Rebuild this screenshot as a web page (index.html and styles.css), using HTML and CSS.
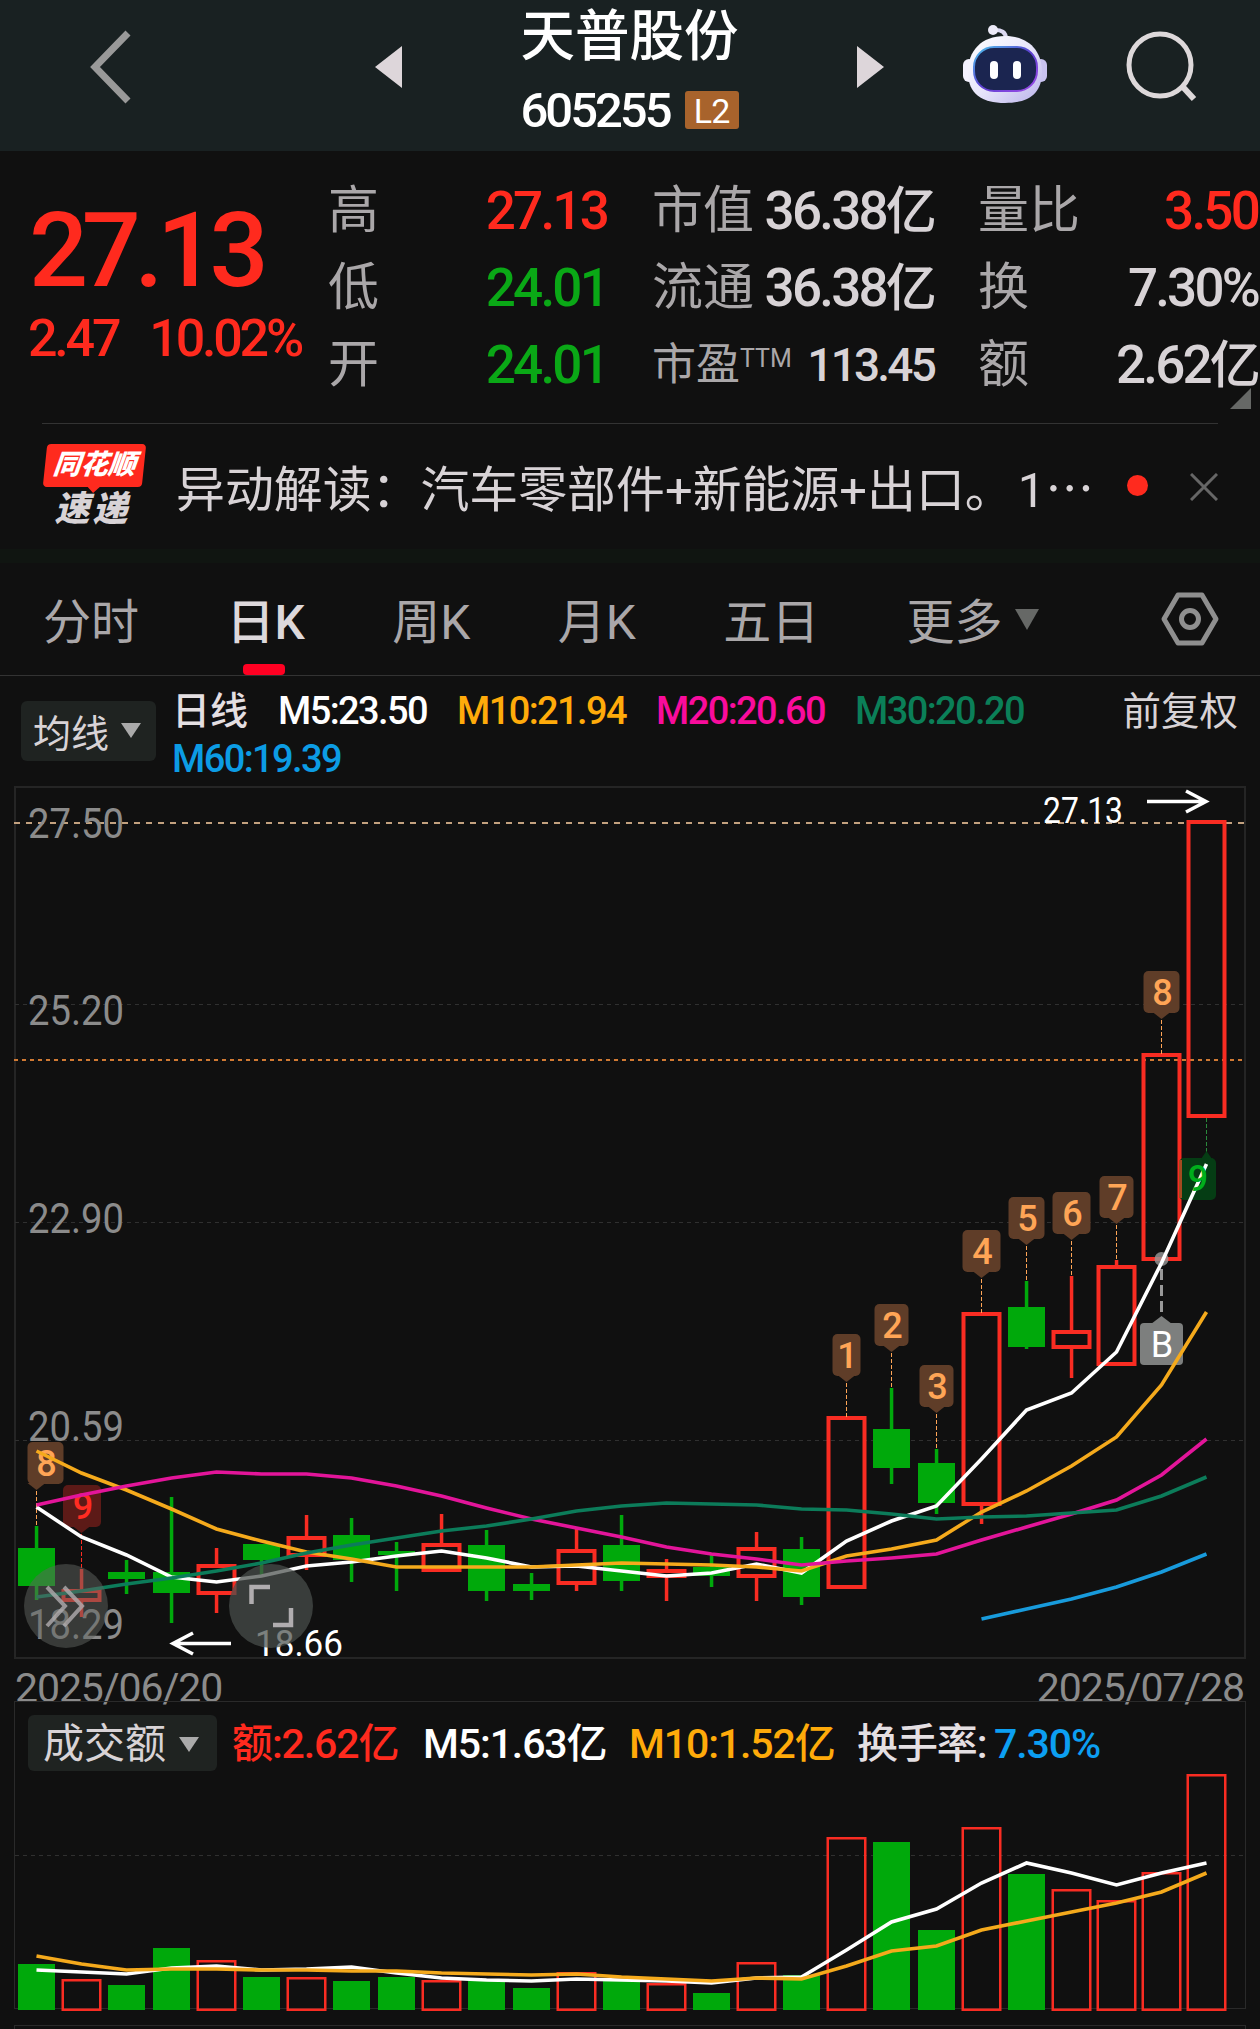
FILE: index.html
```html
<!DOCTYPE html>
<html lang="zh-CN">
<head>
    <meta charset="UTF-8">
    <meta name="viewport" content="width=device-width, initial-scale=1.0">
    <title>天普股份 605255</title>
    <link rel="stylesheet" href="styles.css">
</head>
<body>

    <header class="header">
        <svg class="back" width="48" height="80" viewBox="0 0 48 80"><path d="M41 6 L8 40 L41 74" fill="none" stroke="#999" stroke-width="7"/></svg>
        <svg class="prev" width="27" height="42" viewBox="0 0 27 42"><path d="M27 0 V42 L0 21Z" fill="#ddd6da"/></svg>
        <div class="stock">
            <h1>天普股份</h1>
            <div class="code"><span>605255</span><b>L2</b></div>
        </div>
        <svg class="next" width="27" height="42" viewBox="0 0 27 42"><path d="M0 0 V42 L27 21Z" fill="#ddd6da"/></svg>
        <svg class="robot" width="84" height="84" viewBox="0 0 84 84">
            <defs>
                <linearGradient id="shell" x1="0" y1="0" x2="1" y2="1">
                    <stop offset="0" stop-color="#fff"/><stop offset=".5" stop-color="#e8e6fb"/><stop offset="1" stop-color="#b9b2ea"/>
                </linearGradient>
                <linearGradient id="rim" x1="0" y1="0" x2="1" y2="1">
                    <stop offset="0" stop-color="#4cc4ee"/><stop offset=".5" stop-color="#5b3fd0"/><stop offset="1" stop-color="#a04be8"/>
                </linearGradient>
            </defs>
            <path d="M30 5 Q43 4 43 14" fill="none" stroke="#dcd9f2" stroke-width="4"/>
            <circle cx="30" cy="5" r="5" fill="#eceaf8"/>
            <rect x="0" y="34" width="12" height="23" rx="6" fill="#f4f2ff"/>
            <rect x="72" y="34" width="12" height="23" rx="6" fill="#c9c3f0"/>
            <path d="M42 11 C66 11 79 26 79 47 C79 69 65 78 42 78 C19 78 5 69 5 47 C5 26 18 11 42 11Z" fill="url(#shell)"/>
            <rect x="11" y="22" width="63" height="44" rx="20" fill="#1b2550" stroke="url(#rim)" stroke-width="2"/>
            <rect x="27" y="36" width="8" height="18" rx="4" fill="#fff"/>
            <rect x="50" y="36" width="8" height="18" rx="4" fill="#fff"/>
        </svg>
        <svg class="search" width="72" height="72" viewBox="0 0 72 72"><g fill="none" stroke="#ddd8da" stroke-width="5"><circle cx="34" cy="34" r="31"/><path d="M56 55 L68 68" stroke-width="6"/></g></svg>
    </header>

    <section class="quote">
        <div class="price">
            <div class="last">27.13</div>
            <div class="change"><span>2.47</span><span>10.02%</span></div>
        </div>
        <ul class="stats s1">
            <li><label>高</label><span class="red">27.13</span></li>
            <li><label>低</label><span class="green">24.01</span></li>
            <li><label>开</label><span class="green">24.01</span></li>
        </ul>
        <ul class="stats s2">
            <li><label>市值</label><span>36.38<i>亿</i></span></li>
            <li><label>流通</label><span>36.38<i>亿</i></span></li>
            <li class="pe"><label>市盈<sup>TTM</sup></label><span>113.45</span></li>
        </ul>
        <ul class="stats s3">
            <li><label>量比</label><span class="red">3.50</span></li>
            <li><label>换</label><span>7.30%</span></li>
            <li><label>额</label><span>2.62<i>亿</i></span></li>
        </ul>
        <svg class="corner" width="21" height="21" viewBox="0 0 21 21"><path d="M21 0V21H0Z" fill="#666866"/></svg>
    </section>

    <section class="news">
        <div class="logo">
            <div class="logo-top">同花顺</div>
            <div class="logo-bottom">速递</div>
        </div>
        <p>异动解读：汽车零部件+新能源+出口。<span class="one">1</span>⋯</p>
        <span class="dot"></span>
        <svg width="28" height="28" viewBox="0 0 28 28"><path d="M1 1 L27 27 M27 1 L1 27" stroke="#666" stroke-width="3"/></svg>
    </section>

    <nav class="tabs">
        <a>分时</a>
        <a class="active">日K</a>
        <a>周K</a>
        <a>月K</a>
        <a>五日</a>
        <a>更多</a>
        <svg class="more" width="26" height="21" viewBox="0 0 26 21"><path d="M1 0H25L13 21Z" fill="#666866"/></svg>
        <svg class="setting" width="58" height="54" viewBox="0 0 58 54"><g fill="none" stroke="#8f8f8f" stroke-width="5" stroke-linejoin="round"><path d="M17 3H41L55 27L41 51H17L3 27Z"/><circle cx="29" cy="27" r="8.5"/></g></svg>
    </nav>

    <section class="ma">
        <div class="select">均线<svg width="20" height="15" viewBox="0 0 20 15"><path d="M0 0H20L10 15Z" fill="#aaa"/></svg></div>
        <div class="ma-list">
            <span class="c0">日线</span>
            <span class="c5">M5:23.50</span>
            <span class="c10">M10:21.94</span>
            <span class="c20">M20:20.60</span>
            <span class="c30">M30:20.20</span>
            <span class="c60">M60:19.39</span>
        </div>
        <div class="adjust">前复权</div>
    </section>

    <svg id="kline" width="1260" height="878" viewBox="0 784 1260 878"></svg>

    <div class="dates"><span>2025/06/20</span><span>2025/07/28</span></div>

    <section class="volume">
        <div class="vol-head">
            <div class="select">成交额<svg width="20" height="15" viewBox="0 0 20 15"><path d="M0 0H20L10 15Z" fill="#aaa"/></svg></div>
            <span class="v1">额:2.62亿</span>
            <span class="v2">M5:1.63亿</span>
            <span class="v3">M10:1.52亿</span>
            <span class="v4">换手率:</span><span class="v5">7.30%</span>
        </div>
        <svg id="volume" width="1260" height="239" viewBox="0 1773 1260 239"></svg>
    </section>
    <div class="next-panel"></div>

    <script src="chart.js"></script>
</body>
</html>
```
FILE: styles.css
```css
body {
    margin: 0;
    width: 1260px;
    height: 2029px;
    overflow: hidden;
    background-color: #101010;
    color: #d8d3d6;
    font-family: Roboto, "Noto Sans CJK SC", sans-serif;
}
svg {
    display: block;
    flex: none;
}
.red { color: #ff2a1e; }
.green { color: #0aa816; }

/* header */
.header {
    display: flex;
    align-items: center;
    box-sizing: border-box;
    height: 151px;
    padding-bottom: 17px;
    background-color: #192122;
}
.back { margin-left: 87px; }
.prev { margin-left: 240px; }
.stock {
    align-self: flex-start;
    width: 230px;
    margin-left: 113px;
    color: #fff;
    text-align: center;
}
.stock h1 {
    margin: 0 0 0 -1px;
    font-size: 54.5px;
    font-weight: 500;
    line-height: 73px;
    white-space: nowrap;
}
.code {
    display: flex;
    align-items: center;
    justify-content: center;
    height: 74px;
    font-size: 49px;
    font-weight: 500;
    letter-spacing: -3px;
}
.code b {
    width: 54px;
    height: 38px;
    margin: -1px 1px 0 15px;
    border-radius: 3px;
    background-color: #a8632c;
    font-size: 34px;
    font-weight: 400;
    line-height: 40px;
    letter-spacing: -1px;
}
.next { margin-left: 112px; }
.robot { margin-left: 79px; }
.search { margin-left: 79px; }

/* quote */
.quote {
    position: relative;
    display: flex;
    height: 250px;
    padding-top: 22px;
    white-space: nowrap;
}
.price {
    width: 328px;
    color: #ff2a1e;
}
.last {
    padding: 26px 0 0 29px;
    font-size: 104px;
    font-weight: 500;
    line-height: 104px;
    letter-spacing: -6.4px;
}
.change {
    display: flex;
    gap: 31px;
    padding-left: 28px;
    font-size: 52px;
    font-weight: 500;
    line-height: 72px;
    letter-spacing: -3.2px;
}
.stats {
    margin: 0;
    padding: 0;
    list-style: none;
}
.stats li {
    display: flex;
    justify-content: space-between;
    height: 77px;
    font-size: 53px;
    font-weight: 500;
    line-height: 76px;
    letter-spacing: -2.8px;
}
.stats label {
    color: #aaa7a9;
    font-size: 51px;
    font-weight: 400;
    letter-spacing: 0;
}
.stats i {
    font-style: normal;
    font-size: 51px;
}
.s1 { width: 279px; }
.s2 { width: 282px; margin-left: 45px; }
.s3 { width: 280px; margin-left: 44px; }
.stats .pe { font-size: 46px; }
.pe label { font-size: 44px; }
.pe sup {
    font-size: 25px;
    line-height: 0;
    vertical-align: 13px;
}
.corner {
    position: absolute;
    right: 9px;
    top: 237px;
}

/* news */
.news {
    display: flex;
    align-items: center;
    height: 125px;
    margin: 0 42px;
    border-top: 1px solid #333;
}
.logo {
    flex: none;
    width: 103px;
    text-align: center;
    font-weight: 900;
    font-style: italic;
}
.logo-top {
    position: relative;
    height: 43px;
    line-height: 42px;
    margin: 0 1px 0 3px;
    border-radius: 4px;
    background-color: #ff2a1e;
    color: #fff;
    font-size: 27.5px;
    transform: skewX(-6deg);
}
.logo-top::after {
    content: "";
    position: absolute;
    left: 44px;
    top: 42px;
    border: 7px solid transparent;
    border-top-color: #ff2a1e;
}
.logo-bottom {
    margin: 4px 2px 0 0;
    line-height: 38px;
    font-size: 35px;
    letter-spacing: 3px;
}
.news p {
    flex: none;
    width: 914px;
    margin: -2px 0 0 31px;
    font-size: 48.9px;
    white-space: nowrap;
}
.one { margin-left: 4px; }
.dot {
    flex: none;
    width: 21px;
    height: 21px;
    margin: -2px 42px 0 37px;
    border-radius: 50%;
    background-color: #ff2a1e;
}
.news svg { margin-left: auto; }

/* period tabs */
.tabs {
    display: flex;
    align-items: center;
    box-sizing: border-box;
    height: 127px;
    padding: 0 41px 0 43px;
    border-top: 14px solid #101511;
    border-bottom: 1px solid #333;
    color: #aaa7a9;
    font-size: 48px;
    white-space: nowrap;
}
.tabs a {
    position: relative;
    margin: -2px 87.4px 0 0;
}
.tabs .active {
    color: #ddd8db;
    font-weight: 500;
}
.active::after {
    content: "";
    position: absolute;
    left: 17px;
    bottom: -22px;
    width: 42px;
    height: 11px;
    border-radius: 4px;
    background-color: #ff0022;
}
.tabs a:nth-child(6) { margin-right: 0; }
.more { margin-left: 11px; }
.setting { margin-left: auto; }

/* moving averages */
.ma {
    display: flex;
    height: 108px;
    white-space: nowrap;
}
.select {
    display: flex;
    align-items: center;
    box-sizing: border-box;
    border-radius: 6px;
    background-color: #1f2321;
}
.ma .select {
    width: 135px;
    height: 60px;
    margin: 25px 0 0 21px;
    padding: 0 0 2px 12px;
    gap: 12px;
    font-size: 38px;
}
.ma-list {
    display: flex;
    flex-wrap: wrap;
    align-content: flex-start;
    width: 900px;
    padding: 11px 0 0 16px;
    font-size: 38px;
    font-weight: 500;
    line-height: 48px;
    letter-spacing: -1.6px;
}
.ma-list .c0 {
    width: 106px;
    color: #e4dfe2;
    font-size: 38px;
    letter-spacing: 0;
}
.c5 { width: 179px; color: #fff; }
.c10 { width: 199px; color: #ffab0a; }
.c20 { width: 199px; color: #f90c9c; }
.c30 { width: 180px; color: #0b7f58; }
.c60 { color: #0c9ce4; }
.adjust {
    margin-left: auto;
    padding: 12px 22px 0 0;
    font-size: 38.5px;
    line-height: 48px;
}

/* charts */
.frame { fill: none; stroke: #252525; stroke-width: 2; }
.grid { stroke: #303030; stroke-width: 1; stroke-dasharray: 4 4; }
.up { fill: none; stroke: #f92c22; stroke-width: 4; }
.wick-up { fill: #f92c22; }
.down { fill: #00a90b; }
.line { fill: none; stroke-width: 3.6; }
.axis { fill: #8b8b8b; font-size: 42px; }
.mark { fill: #fff; font-size: 37px; }
.tag { font-size: 36px; font-weight: 500; text-anchor: middle; }
.buy { font-weight: 400; }
.volume .up { stroke-width: 2.5; }
.dates {
    display: flex;
    justify-content: space-between;
    height: 40px;
    padding: 0 16px 0 15px;
    color: #8b8b8b;
    font-size: 41px;
    line-height: 53px;
    letter-spacing: -1.1px;
}
.volume {
    position: relative;
    height: 310px;
}
.volume::before {
    content: "";
    position: absolute;
    left: 14px;
    top: -1px;
    width: 1230px;
    height: 306px;
    border: 1px solid #2a2a2a;
}
.vol-head {
    position: relative;
    display: flex;
    align-items: center;
    height: 56px;
    padding: 13px 0 2px 28px;
    font-size: 41px;
    font-weight: 500;
    line-height: 56px;
    letter-spacing: -1.1px;
    white-space: nowrap;
}
.vol-head span { margin-top: 2px; }
.vol-head .select {
    width: 189px;
    height: 56px;
    padding: 2px 0 0 15px;
    gap: 13px;
    letter-spacing: 0;
    font-weight: 400;
}
.vol-head .v1 { width: 191px; margin-left: 15px; color: #ff2a1e; }
.v2 { width: 206px; color: #fff; }
.v3 { width: 228px; color: #ffab0a; }
.v4 { width: 137px; color: #e4dfe2; }
.v5 { color: #0c9ff2; }
#volume { position: relative; }
.next-panel {
    height: 10px;
    margin: 13px 14px 0;
    border: 1px solid #2a2a2a;
}
```
FILE: chart.js
```js
// kind, body top, body bottom, wick top, wick bottom, volume bar top
const days = [
    ['g', 1548, 1586, 1526, 1600, 1964],
    ['r', 1589, 1602, 1569, 1617, 1980],
    ['g', 1572, 1579, 1560, 1594, 1985],
    ['g', 1572, 1593, 1497, 1623, 1948],
    ['r', 1564, 1595, 1548, 1613, 1961],
    ['g', 1544, 1560, 1544, 1575, 1977],
    ['r', 1536, 1557, 1515, 1570, 1978],
    ['g', 1535, 1560, 1518, 1582, 1981],
    ['g', 1551, 1555, 1542, 1591, 1977],
    ['r', 1543, 1572, 1514, 1572, 1981],
    ['g', 1545, 1591, 1530, 1601, 1981],
    ['g', 1584, 1591, 1573, 1600, 1988],
    ['r', 1549, 1585, 1529, 1591, 1973],
    ['g', 1545, 1581, 1515, 1591, 1980],
    ['r', 1569, 1578, 1559, 1601, 1984],
    ['g', 1567, 1576, 1555, 1587, 1993],
    ['r', 1547, 1578, 1532, 1601, 1963],
    ['g', 1549, 1597, 1537, 1605, 1975],
    ['r', 1416, 1589, 1416, 1589, 1838],
    ['g', 1429, 1468, 1388, 1484, 1842],
    ['g', 1463, 1503, 1449, 1514, 1930],
    ['r', 1312, 1506, 1312, 1524, 1828],
    ['g', 1307, 1347, 1281, 1349, 1874],
    ['r', 1330, 1349, 1276, 1378, 1890],
    ['r', 1265, 1366, 1260, 1366, 1901],
    ['r', 1053, 1261, 1053, 1261, 1873],
    ['r', 820, 1118, 820, 1118, 1775]
];
const ma5 = [1507,1537,1555,1577,1582,1576,1566,1562,1556,1551,1558,1567,1566,1571,1576,1573,1564,1573,1541,1521,1506,1459,1410,1393,1352,1263,1164];
const ma10 = [1451,1473,1490,1509,1529,1541,1552,1559,1567,1567,1567,1567,1565,1563,1564,1565,1567,1571,1556,1549,1540,1512,1491,1466,1437,1385,1312];
const ma20 = [1505,1495,1486,1478,1472,1474,1474,1478,1486,1496,1508,1519,1528,1537,1547,1554,1559,1565,1561,1558,1554,1540,1527,1514,1500,1475,1439];
const ma30 = [1597,1591,1584,1578,1571,1563,1553,1545,1538,1531,1526,1519,1511,1506,1503,1504,1505,1509,1510,1514,1519,1517,1516,1513,1510,1496,1477];
const ma60 = [1619,1609,1599,1587,1572,1554];
const vol5 = [1970,1972,1974,1968,1966,1970,1969,1967,1973,1978,1980,1981,1979,1980,1981,1983,1978,1977,1950,1922,1909,1883,1863,1873,1885,1873,1863];
const vol10 = [1956,1964,1970,1969,1969,1970,1970,1971,1971,1973,1974,1975,1974,1977,1979,1981,1978,1979,1966,1951,1946,1930,1921,1912,1903,1892,1873];

const x = i => 36.5 + i * 45;

function line(values, color, start = 0) {
    const pts = values.map((v, i) => x(i + start) + ',' + v).join(' ');
    return `<polyline class="line" stroke="${color}" points="${pts}"/>`;
}

function bar(i, kind, top, bottom, half) {
    if (kind === 'g') {
        return `<rect class="down" x="${x(i) - 18.5}" y="${top}" width="37" height="${bottom - top}"/>`;
    }
    return `<rect class="up" x="${x(i) - 20 + half}" y="${top + half}" width="${40 - 2 * half}" height="${bottom - top - 2 * half}"/>`;
}

function text(cls, tx, y, w, s) {
    return `<text class="${cls}" x="${tx}" y="${y}" textLength="${w}" lengthAdjust="spacingAndGlyphs">${s}</text>`;
}

// numbered tag hanging over a candle
function tag(i, top, w, s, bg = '#5f3d28', fg = '#ffa556', cx = x(i)) {
    return `<path d="M${x(i)} ${top + 49}V${top + 83}" stroke="${fg}" stroke-dasharray="4 2"/>
        <rect x="${cx - w / 2}" y="${top}" width="${w}" height="42" rx="5" fill="${bg}"/>
        <path d="M${x(i) - 9} ${top + 41}H${x(i) + 9}L${x(i)} ${top + 48}Z" fill="${bg}"/>
        <text class="tag" x="${cx + 1}" y="${top + 34}" fill="${fg}">${s}</text>`;
}

let k = '<path class="frame" d="M15 787H1245V1658H15Z"/>';
[1004.5, 1222.5, 1440.5].forEach(y => k += `<path class="grid" d="M15 ${y}H1245"/>`);
k += '<path d="M14 823H1246" stroke="#c3a17f" stroke-width="2" stroke-dasharray="6 6"/>';
k += '<path d="M14 1060H1246" stroke="#d07a34" stroke-width="2" stroke-dasharray="4 4"/>';
[['27.50', 837.5], ['25.20', 1025], ['22.90', 1233], ['20.59', 1441], ['18.29', 1638.5]]
    .forEach(p => k += text('axis', 28, p[1], 96, p[0]));

k += tag(0, 1442, 36, 8, '#5f3d28', '#ffa556', 45.5);
k += tag(1, 1485, 38, 9, '#5c1a17', '#ff2c22', 82);

days.forEach((d, i) => {
    const [kind, top, bottom, high, low] = d;
    const cls = kind === 'g' ? 'down' : 'wick-up';
    if (top > high) k += `<rect class="${cls}" x="${x(i) - 1.7}" y="${high}" width="3.5" height="${top - high}"/>`;
    if (low > bottom) k += `<rect class="${cls}" x="${x(i) - 1.7}" y="${bottom}" width="3.5" height="${low - bottom}"/>`;
    k += bar(i, kind, top, bottom, 2);
});

k += tag(18, 1334, 28, 1) + tag(19, 1304, 34, 2) + tag(20, 1365, 34, 3) + tag(21, 1230, 38, 4)
    + tag(22, 1197, 36, 5) + tag(23, 1192, 38, 6) + tag(24, 1176, 34, 7) + tag(25, 971, 36, 8);

// lower nine
k += `<path d="M1206.5 1118V1152" stroke="#2a8a3c" stroke-dasharray="4 2"/>
    <rect x="1179" y="1158" width="37" height="42" rx="5" fill="#053d14"/>
    <rect x="1179" y="1160" width="3" height="38" fill="#a34a20"/>
    <path d="M1201 1159L1206.5 1151L1212 1159Z" fill="#053d14"/>`;

// buy point
k += `<circle cx="1161.5" cy="1259" r="7" fill="#999" opacity=".8"/>
    <path d="M1161.5 1269V1316" stroke="#999" stroke-width="3" stroke-dasharray="11 5"/>
    <path d="M1151 1324L1161.5 1316L1172 1324Z" fill="#7d7f7e"/>
    <rect x="1140" y="1323" width="43" height="42" rx="4" fill="#7d7f7e"/>
    <text class="tag buy" x="1162" y="1357" fill="#fff">B</text>`;

k += line(ma5, '#fff') + line(ma10, '#f5aa1c') + line(ma20, '#e3159a') + line(ma30, '#0c7c5a') + line(ma60, '#189bdc', 21);
k += '<text class="tag" x="1198" y="1191" fill="#00ae1c">9</text>';

k += text('mark', 1043, 823, 80, '27.13');
k += '<path d="M1147 801.5H1204M1186 791L1206 801.5L1186 812" fill="none" stroke="#fff" stroke-width="3.5"/>';
k += text('mark', 255, 1656, 88, '18.66');
k += '<path d="M231 1643.5H174M193 1633L173 1643.5L193 1654" fill="none" stroke="#fff" stroke-width="3.5"/>';

k += `<circle cx="66" cy="1606" r="42" fill="#606360" opacity=".5"/>
    <path d="M47 1587L65 1606L47 1626M64 1587L82 1606L64 1626" fill="none" stroke="#b0adaf" stroke-width="4" opacity=".8"/>
    <circle cx="271" cy="1606" r="42" fill="#4a4f4c" opacity=".72"/>
    <path d="M251.5 1604V1587H270M273 1625H291V1608" fill="none" stroke="#b0adaf" stroke-width="4.5"/>`;
document.getElementById('kline').innerHTML = k;

let v = '<path class="grid" d="M15 1855.5H1245"/>';
days.forEach((d, i) => v += bar(i, d[0], d[5] - (d[0] === 'g' ? 0 : 1), d[0] === 'g' ? 2010 : 2011, 1.25));
v += line(vol5, '#fff') + line(vol10, '#f5aa1c');
document.getElementById('volume').innerHTML = v;
```
